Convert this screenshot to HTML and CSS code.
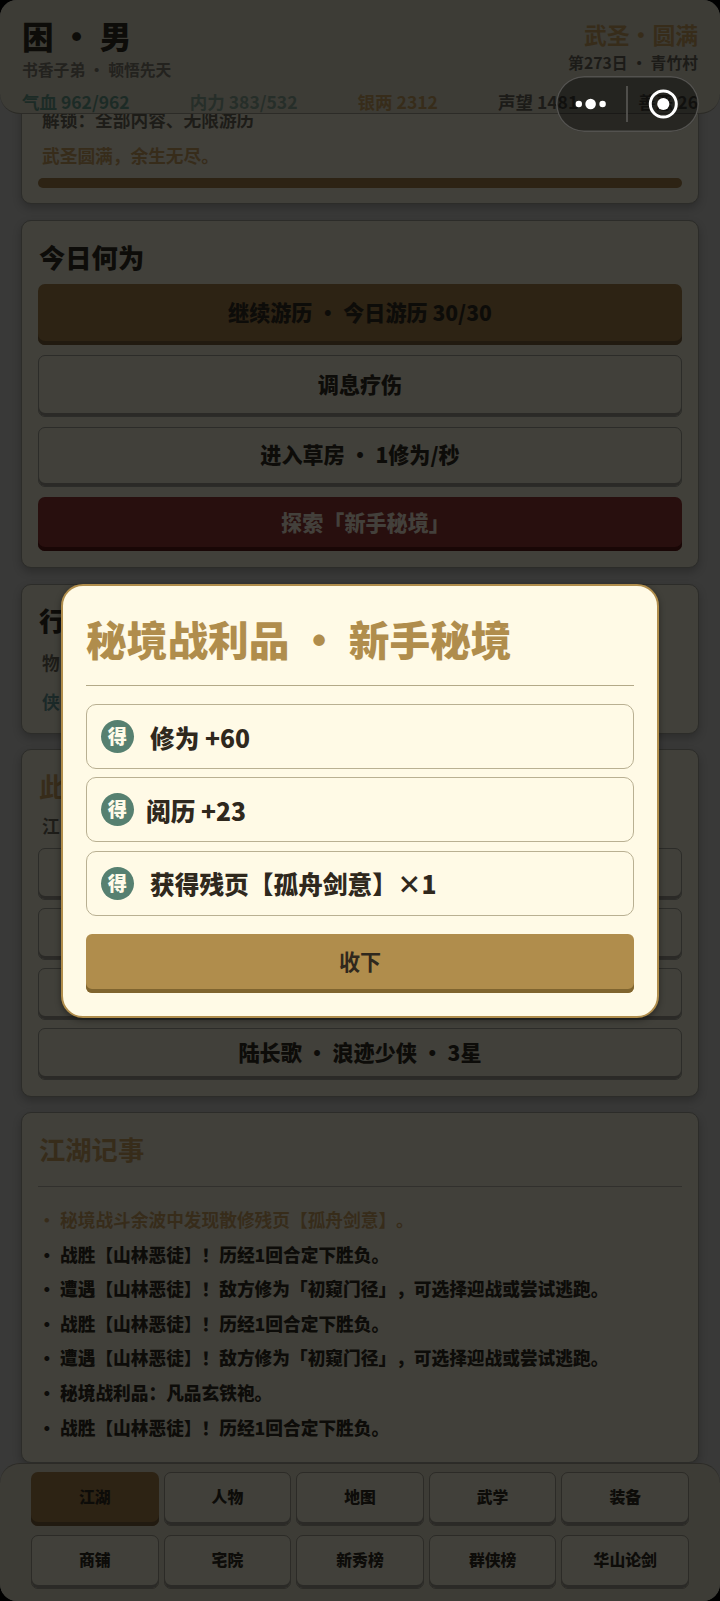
FILE: index.html
```html
<!DOCTYPE html>
<html lang="zh-CN">
<head>
<meta charset="utf-8">
<title>江湖</title>
<link rel="stylesheet" href="styles.css">
</head>
<body>
<div class="screen">
  <header class="top">
    <div class="who">
      <div>
        <h1 class="name">困 · 男</h1>
        <p class="origin">书香子弟 · 顿悟先天</p>
      </div>
      <div class="rank">
        <p class="realm">武圣·圆满</p>
        <p class="day">第273日 · 青竹村</p>
      </div>
    </div>
    <div class="stats">
      <span class="teal">气血 962/962</span>
      <span class="green">内力 383/532</span>
      <span class="gold">银两 2312</span>
      <span>声望 1481</span>
      <span>善恶 26</span>
    </div>
  </header>

  <main class="feed">
    <section class="card card-goal">
      <p class="line">解锁：全部内容、无限游历</p>
      <p class="line gold">武圣圆满，余生无尽。</p>
      <div class="bar"></div>
    </section>

    <section class="card card-today">
      <h2 class="title">今日何为</h2>
      <button class="btn btn-gold h61">继续游历 · 今日游历 30/30</button>
      <button class="btn h62">调息疗伤</button>
      <button class="btn h60">进入草房 · 1修为/秒</button>
      <button class="btn btn-red h54">探索「新手秘境」</button>
    </section>

    <section class="card card-bag">
      <h2 class="title">行</h2>
      <p class="line">物</p>
      <p class="line teal">侠</p>
    </section>

    <section class="card card-place">
      <h2 class="title gold">此</h2>
      <p class="line">江</p>
      <button class="btn"></button>
      <button class="btn"></button>
      <button class="btn"></button>
      <button class="btn">陆长歌 · 浪迹少侠 · 3星</button>
    </section>

    <section class="card card-log">
      <h2 class="title gold">江湖记事</h2>
      <ul class="log">
        <li class="gold">秘境战斗余波中发现散修残页【孤舟剑意】。</li>
        <li>战胜【山林恶徒】！历经1回合定下胜负。</li>
        <li>遭遇【山林恶徒】！敌方修为「初窥门径」，可选择迎战或尝试逃跑。</li>
        <li>战胜【山林恶徒】！历经1回合定下胜负。</li>
        <li>遭遇【山林恶徒】！敌方修为「初窥门径」，可选择迎战或尝试逃跑。</li>
        <li>秘境战利品：凡品玄铁袍。</li>
        <li>战胜【山林恶徒】！历经1回合定下胜负。</li>
      </ul>
    </section>
  </main>

  <nav class="tabs">
    <button class="tab active">江湖</button>
    <button class="tab">人物</button>
    <button class="tab">地图</button>
    <button class="tab">武学</button>
    <button class="tab">装备</button>
    <button class="tab">商铺</button>
    <button class="tab">宅院</button>
    <button class="tab">新秀榜</button>
    <button class="tab">群侠榜</button>
    <button class="tab">华山论剑</button>
  </nav>

  <div class="modal">
    <h2 class="modal-title">秘境战利品 · 新手秘境</h2>
    <div class="loot"><span class="badge">得</span><span>修为 +60</span></div>
    <div class="loot tight"><span class="badge">得</span><span>阅历 +23</span></div>
    <div class="loot"><span class="badge">得</span><span>获得残页【孤舟剑意】×1</span></div>
    <button class="accept">收下</button>
  </div>

  <div class="capsule">
    <svg width="143" height="56" viewBox="0 0 143 56">
      <g fill="#fff">
        <circle cx="22.8" cy="28" r="3.2"/>
        <circle cx="34.6" cy="28" r="5.3"/>
        <circle cx="46.6" cy="28" r="3.2"/>
        <circle cx="107.3" cy="28" r="6.1"/>
      </g>
      <circle cx="107.3" cy="28" r="13" fill="none" stroke="#fff" stroke-width="3"/>
      <path d="M71 10v36" stroke="#5b5a57" stroke-width="1.6"/>
    </svg>
  </div>
</div>
</body>
</html>
```
FILE: styles.css
```css
* { box-sizing: border-box; margin: 0; padding: 0; }

body { background: #000; }

.screen {
  position: relative;
  display: flex;
  flex-direction: column;
  width: 720px;
  height: 1601px;
  overflow: hidden;
  border-radius: 17px;
  background: #393938;
  color: #0d0c09;
  font-family: "Noto Sans CJK SC", sans-serif;
  font-weight: 700;
  text-spacing-trim: space-all;
}

button { font: inherit; color: inherit; border: 0; }

.gold { color: #372c1a; }
.teal { color: #1c2b26; }
.green { color: #262e29; }

.top {
  flex: none;
  height: 114px;
  padding: 15px 22px 0;
  background: #3d3c36;
  border-bottom: 1px solid #2c2b27;
  border-radius: 0 0 20px 20px;
}
.who { display: flex; justify-content: space-between; height: 74px; }
.name { font-size: 31.6px; line-height: 41px; font-weight: 900; }
.origin { font-size: 15.8px; line-height: 28px; color: #23221e; }
.rank { text-align: right; }
.realm { font-size: 22.8px; line-height: 39px; color: #372c1a; }
.day { font-size: 15.8px; line-height: 17px; color: #1c1b18; }
.stats {
  display: flex;
  justify-content: space-between;
  font-size: 17.5px;
  line-height: 26px;
  color: #1c1b18;
}
.stats .teal { color: #1c2b26; }
.stats .green { color: #262e29; }
.stats .gold { color: #372c1a; }

.feed { flex: none; height: 1349px; padding: 0 21px; overflow: hidden; }

.card {
  display: flex;
  flex-direction: column;
  padding: 0 16px;
  border: 1px solid #2c2c29;
  border-radius: 10px;
  background: #41403a;
  box-shadow: 0 4px 8px rgba(0, 0, 0, .22);
}
.title { padding-left: 1px; font-size: 26.3px; line-height: 36px; font-weight: 900; }
.title.gold { font-weight: 700; }
.line { padding-left: 4px; font-size: 17.7px; line-height: 36px; color: #1d1c18; }
.line.gold { color: #372c1a; }
.line.teal { color: #1b2928; }

.btn {
  flex: none;
  height: 52px;
  padding-bottom: 5px;
  border: 1px solid #2c2c29;
  border-radius: 7px;
  background: #41403a;
  box-shadow: inset 0 -3px #2b2a27;
  font-size: 21.1px;
  font-weight: 900;
}
.btn-gold { border: 0; background: #2d2314; box-shadow: inset 0 -4px #211a10; }
.btn-red {
  padding-left: 11px;
  border: 0;
  background: #280f0e;
  box-shadow: inset 0 -4px #190706;
  color: #43403b;
}
.h54 { height: 54px; }
.h60 { height: 60px; padding-bottom: 7px; }
.h61 { height: 61px; }
.h62 { height: 62px; }

.card-goal { height: 120px; margin-top: -30px; padding-top: 16px; }
.bar { height: 10px; margin-top: 5px; border-radius: 5px; background: #2d2314; }

.card-today { height: 348px; margin-top: 16px; padding-top: 18px; }
.card-today .btn { margin-bottom: 10px; }
.card-today .title { margin-bottom: 9px; }

.card-bag { height: 150px; margin-top: 16px; padding-top: 17px; }
.card-bag .title { margin-bottom: 5px; }
.card-bag .line { line-height: 39px; }

.card-place { height: 348px; margin-top: 15px; padding-top: 18px; }
.card-place .line { margin: 3px 0 5px; }
.card-place .btn { margin-bottom: 8px; }

.card-log { height: 351px; margin-top: 15px; padding-top: 18px; }
.card-log .title { height: 56px; border-bottom: 1px solid #31302d; }
.log { padding-top: 15px; list-style: none; font-size: 17.7px; line-height: 34.6px; font-weight: 900; }
.log .gold { font-weight: 700; }
.log li::before { content: "·"; display: inline-block; width: 18px; margin-right: 4px; }

.tabs {
  flex: none;
  display: grid;
  grid-template-columns: repeat(5, 1fr);
  grid-auto-rows: 54px;
  gap: 9px 5px;
  height: 138px;
  padding: 8px 31px 0;
  border-top: 1px solid #2c2b27;
  border-radius: 20px 20px 0 0;
  background: #3d3c36;
}
.tab {
  padding-bottom: 5px;
  border: 1px solid #2c2b27;
  border-radius: 7px;
  background: #41403a;
  box-shadow: inset 0 -3px #2b2a27;
  font-size: 15.8px;
  font-weight: 900;
}
.tab.active { border: 0; background: #2d2314; box-shadow: inset 0 -4px #211a10; }

.modal {
  position: absolute;
  left: 61px;
  top: 584px;
  width: 598px;
  height: 434px;
  display: flex;
  flex-direction: column;
  padding: 19px 23px 0;
  border: 2px solid #b08d4c;
  border-radius: 22px;
  background: #fffae6;
  box-shadow: 0 2px 6px rgba(0, 0, 0, .4);
  color: #2f281d;
}
.modal-title {
  height: 81px;
  margin-bottom: 18px;
  border-bottom: 1px solid #b3a988;
  color: #b08d4c;
  font-size: 40.7px;
  line-height: 68px;
  font-weight: 900;
}
.loot {
  display: flex;
  align-items: center;
  flex: none;
  height: 65px;
  margin-bottom: 8.3px;
  padding: 0 0 0 14px;
  border: 1px solid #b9b092;
  border-radius: 10px;
  gap: 16px;
  font-size: 24.7px;
  font-weight: 900;
}
.loot.tight { gap: 12px; }
.badge {
  width: 33px;
  height: 33px;
  border-radius: 50%;
  background: #568070;
  color: #fffbe9;
  font-size: 19.3px;
  line-height: 32px;
  text-align: center;
}
.accept {
  height: 59px;
  margin-top: 10.1px;
  padding-bottom: 5px;
  border-radius: 6px;
  background: #b08d4c;
  box-shadow: inset 0 -4px #80652f;
  font-size: 21.1px;
}

.capsule {
  position: absolute;
  left: 556px;
  top: 76px;
  width: 143px;
  height: 56px;
  border-radius: 28px;
  background: rgba(0, 0, 0, .4);
  box-shadow: inset 0 0 0 1.5px #53524f;
}
.capsule svg { display: block; }
```
